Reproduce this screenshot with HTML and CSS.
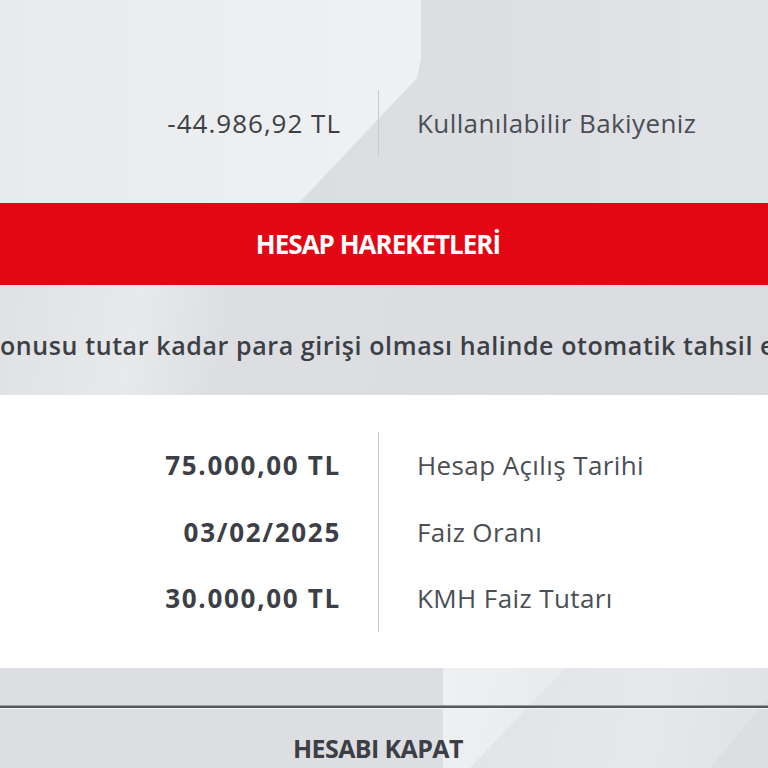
FILE: index.html
```html
<!DOCTYPE html>
<html lang="tr">
<head>
<meta charset="utf-8">
<title>Hesap</title>
<link rel="stylesheet" href="styles.css">
</head>
<body>
<div class="page">
  <section class="balance">
    <div class="pair">
      <div class="value">-44.986,92 TL</div>
      <div class="label">Kullanılabilir Bakiyeniz</div>
    </div>
  </section>
  <div class="redbar">HESAP HAREKETLERİ</div>
  <section class="notice">
    <p class="notice-text">onusu tutar kadar para girişi olması halinde otomatik tahsil edilecektir.</p>
  </section>
  <section class="details">
    <div class="grid">
      <div class="value bold">75.000,00 TL</div>
      <div class="label">Hesap Açılış Tarihi</div>
      <div class="value bold">03/02/2025</div>
      <div class="label">Faiz Oranı</div>
      <div class="value bold">30.000,00 TL</div>
      <div class="label">KMH Faiz Tutarı</div>
    </div>
  </section>
  <section class="footer">
    <div class="rule"></div>
    <div class="close">HESABI KAPAT</div>
  </section>
</div>
</body>
</html>
```
FILE: styles.css
```css
html, body {
  margin: 0;
  padding: 0;
}
body {
  width: 768px;
  height: 768px;
  overflow: hidden;
  font-family: "Open Sans", "Liberation Sans", sans-serif;
  background: #dcdee1;
}
.page {
  width: 768px;
}
.balance {
  position: relative;
  height: 203px;
  background: linear-gradient(90deg, #dadce0 0%, #dcdee1 60%, #e2e4e7 100%);
  padding-top: 90px;
  box-sizing: border-box;
  overflow: hidden;
}
.balance::before {
  content: "";
  position: absolute;
  left: 0;
  top: 0;
  width: 430px;
  height: 203px;
  background: linear-gradient(90deg, #e8eaec 0%, #eff1f3 100%);
  clip-path: polygon(0 0, 421px 0, 421px 58px, 417px 78px, 299px 203px, 0 203px);
}
.pair {
  position: relative;
  display: grid;
  grid-template-columns: 378px 1fr;
  width: 100%;
}
.value {
  text-align: right;
  padding-right: 37px;
  font-size: 26px;
  font-weight: 500;
  color: #3c4046;
  letter-spacing: 1px;
  line-height: 67px;
}
.label {
  border-left: 1px solid #c9cbce;
  padding-left: 38px;
  font-size: 26px;
  color: #4a4e55;
  letter-spacing: 0.4px;
  line-height: 67px;
}
.redbar {
  height: 82px;
  background: #e30613;
  color: #ffffff;
  display: flex;
  align-items: center;
  justify-content: center;
  padding-right: 12px;
  font-size: 26px;
  font-weight: 700;
  letter-spacing: -1px;
}
.notice {
  height: 110px;
  background: linear-gradient(100deg, #dfe1e4 0%, #e7e9eb 18%, #dcdee1 30%, #dadcdf 100%);
  display: flex;
  align-items: center;
  padding-top: 10px;
  box-sizing: border-box;
  overflow: hidden;
}
.notice-text {
  margin: 0;
  white-space: nowrap;
  font-size: 25px;
  font-weight: 600;
  color: #3c4046;
  letter-spacing: 0.6px;
}
.details {
  height: 273px;
  background: #ffffff;
  padding-top: 37px;
  box-sizing: border-box;
}
.grid {
  display: grid;
  grid-template-columns: 378px 1fr;
}
.grid .value, .grid .label {
  line-height: 66.5px;
}
.bold {
  font-weight: 700;
  letter-spacing: 1.7px;
}
.footer {
  position: relative;
  height: 100px;
  background: #dcdee1;
  padding-top: 37px;
  box-sizing: border-box;
  overflow: hidden;
}
.footer::before {
  content: "";
  position: absolute;
  left: 443px;
  top: 0;
  width: 325px;
  height: 100px;
  background: linear-gradient(100deg, #eef0f2 0%, #e8eaec 40%, #e4e6e9 100%);
  clip-path: polygon(0 0, 325px 0, 325px 20px, 265px 100px, 27px 100px, 0 100px);
}
.footer::after {
  content: "";
  position: absolute;
  left: 470px;
  top: 0;
  width: 298px;
  height: 100px;
  background: linear-gradient(100deg, #e1e3e6 0%, #e6e8eb 60%, #dfe1e4 100%);
  clip-path: polygon(95px 0, 298px 0, 298px 30px, 240px 100px, 0 100px);
}
.rule {
  position: relative;
  z-index: 1;
  height: 2px;
  background: #55585c;
  border-top: 1px solid #9a9da1;
  border-bottom: 1px solid #f2f3f4;
}
.close {
  position: relative;
  z-index: 1;
  text-align: center;
  padding-right: 12px;
  margin-top: 22px;
  font-size: 25px;
  font-weight: 700;
  color: #3c4046;
  letter-spacing: -0.6px;
}
```
